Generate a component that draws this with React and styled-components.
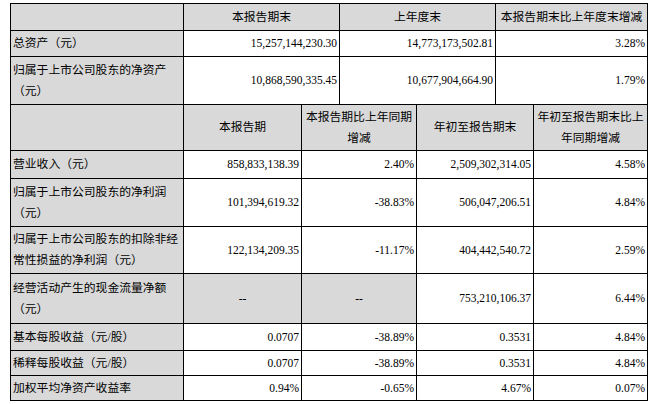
import React from "react";
import styled, { createGlobalStyle } from "styled-components";

const GlobalStyle = createGlobalStyle`
  html, body {
    margin: 0;
    padding: 0;
    background: #ffffff;
  }
  body {
    font-family: "Liberation Serif", "Noto Sans CJK SC", serif;
    color: #000000;
  }
`;

const Page = styled.div`
  padding: 3px 0 0 10px;
`;

const Table = styled.table`
  border-collapse: collapse;
  table-layout: fixed;
  width: 638px;
`;

const Row = styled.tr`
  height: ${(p) => p.$h}px;
`;

const Cell = styled.td`
  border: 1px solid #000000;
  padding: 0 2px;
  background: ${(p) => (p.$gray ? "#d9d9d9" : "#ffffff")};
  text-align: ${(p) => p.$align || "right"};
  vertical-align: middle;
  font-family: "Liberation Serif", "Noto Sans CJK SC", serif;
  font-size: 11.5px;
  line-height: 21px;
  color: #000000;
  white-space: nowrap;
  overflow: hidden;
`;

const Label = styled(Cell)`
  font-size: 11.8px;
`;

const cols = [173, 118, 38, 77, 79, 38, 114];

const topRows = [
  { h: 26, label: "总资产（元）", vals: ["15,257,144,230.30", "14,773,173,502.81", "3.28%"] },
  {
    h: 48,
    label: ["归属于上市公司股东的净资产", "（元）"],
    vals: ["10,868,590,335.45", "10,677,904,664.90", "1.79%"],
  },
];

const bottomRows = [
  { h: 28, label: "营业收入（元）", vals: ["858,833,138.39", "2.40%", "2,509,302,314.05", "4.58%"] },
  {
    h: 48,
    label: ["归属于上市公司股东的净利润", "（元）"],
    vals: ["101,394,619.32", "-38.83%", "506,047,206.51", "4.84%"],
  },
  {
    h: 47,
    label: ["归属于上市公司股东的扣除非经", "常性损益的净利润（元）"],
    vals: ["122,134,209.35", "-11.17%", "404,442,540.72", "2.59%"],
  },
  {
    h: 50,
    label: ["经营活动产生的现金流量净额", "（元）"],
    vals: ["--", "--", "753,210,106.37", "6.44%"],
  },
  { h: 27, label: "基本每股收益（元/股）", vals: ["0.0707", "-38.89%", "0.3531", "4.84%"] },
  { h: 25, label: "稀释每股收益（元/股）", vals: ["0.0707", "-38.89%", "0.3531", "4.84%"] },
  { h: 25, label: "加权平均净资产收益率", vals: ["0.94%", "-0.65%", "4.67%", "0.07%"] },
];

const topSpans = [2, 2, 2];
const bottomSpans = [1, 2, 2, 1];

const renderLabel = (label) =>
  Array.isArray(label)
    ? label.map((line, i) => (
        <React.Fragment key={i}>
          {i > 0 && <br />}
          {line}
        </React.Fragment>
      ))
    : label;

const App = () => (
  <Page>
    <GlobalStyle />
    <Table>
      <colgroup>
        {cols.map((w, i) => (
          <col key={i} style={{ width: w }} />
        ))}
      </colgroup>
      <tbody>
        <Row $h={27}>
          <Label $gray />
          <Label $gray $align="center" colSpan={2}>本报告期末</Label>
          <Label $gray $align="center" colSpan={2}>上年度末</Label>
          <Label $gray $align="center" colSpan={2}>本报告期末比上年度末增减</Label>
        </Row>
        {topRows.map((r, i) => (
          <Row key={i} $h={r.h}>
            <Label $gray $align="left">{renderLabel(r.label)}</Label>
            {r.vals.map((v, j) => (
              <Cell key={j} colSpan={topSpans[j]}>{v}</Cell>
            ))}
          </Row>
        ))}
        <Row $h={46}>
          <Label $gray />
          <Label $gray $align="center">本报告期</Label>
          <Label $gray $align="center" colSpan={2}>
            本报告期比上年同期
            <br />
            增减
          </Label>
          <Label $gray $align="center" colSpan={2}>年初至报告期末</Label>
          <Label $gray $align="center">
            年初至报告期末比上
            <br />
            年同期增减
          </Label>
        </Row>
        {bottomRows.map((r, i) => (
          <Row key={i} $h={r.h}>
            <Label $gray $align="left">{renderLabel(r.label)}</Label>
            {r.vals.map((v, j) => {
              const dash = v === "--";
              return (
                <Cell
                  key={j}
                  colSpan={bottomSpans[j]}
                  $gray={dash}
                  $align={dash ? "center" : "right"}
                >
                  {v}
                </Cell>
              );
            })}
          </Row>
        ))}
      </tbody>
    </Table>
  </Page>
);

export default App;
